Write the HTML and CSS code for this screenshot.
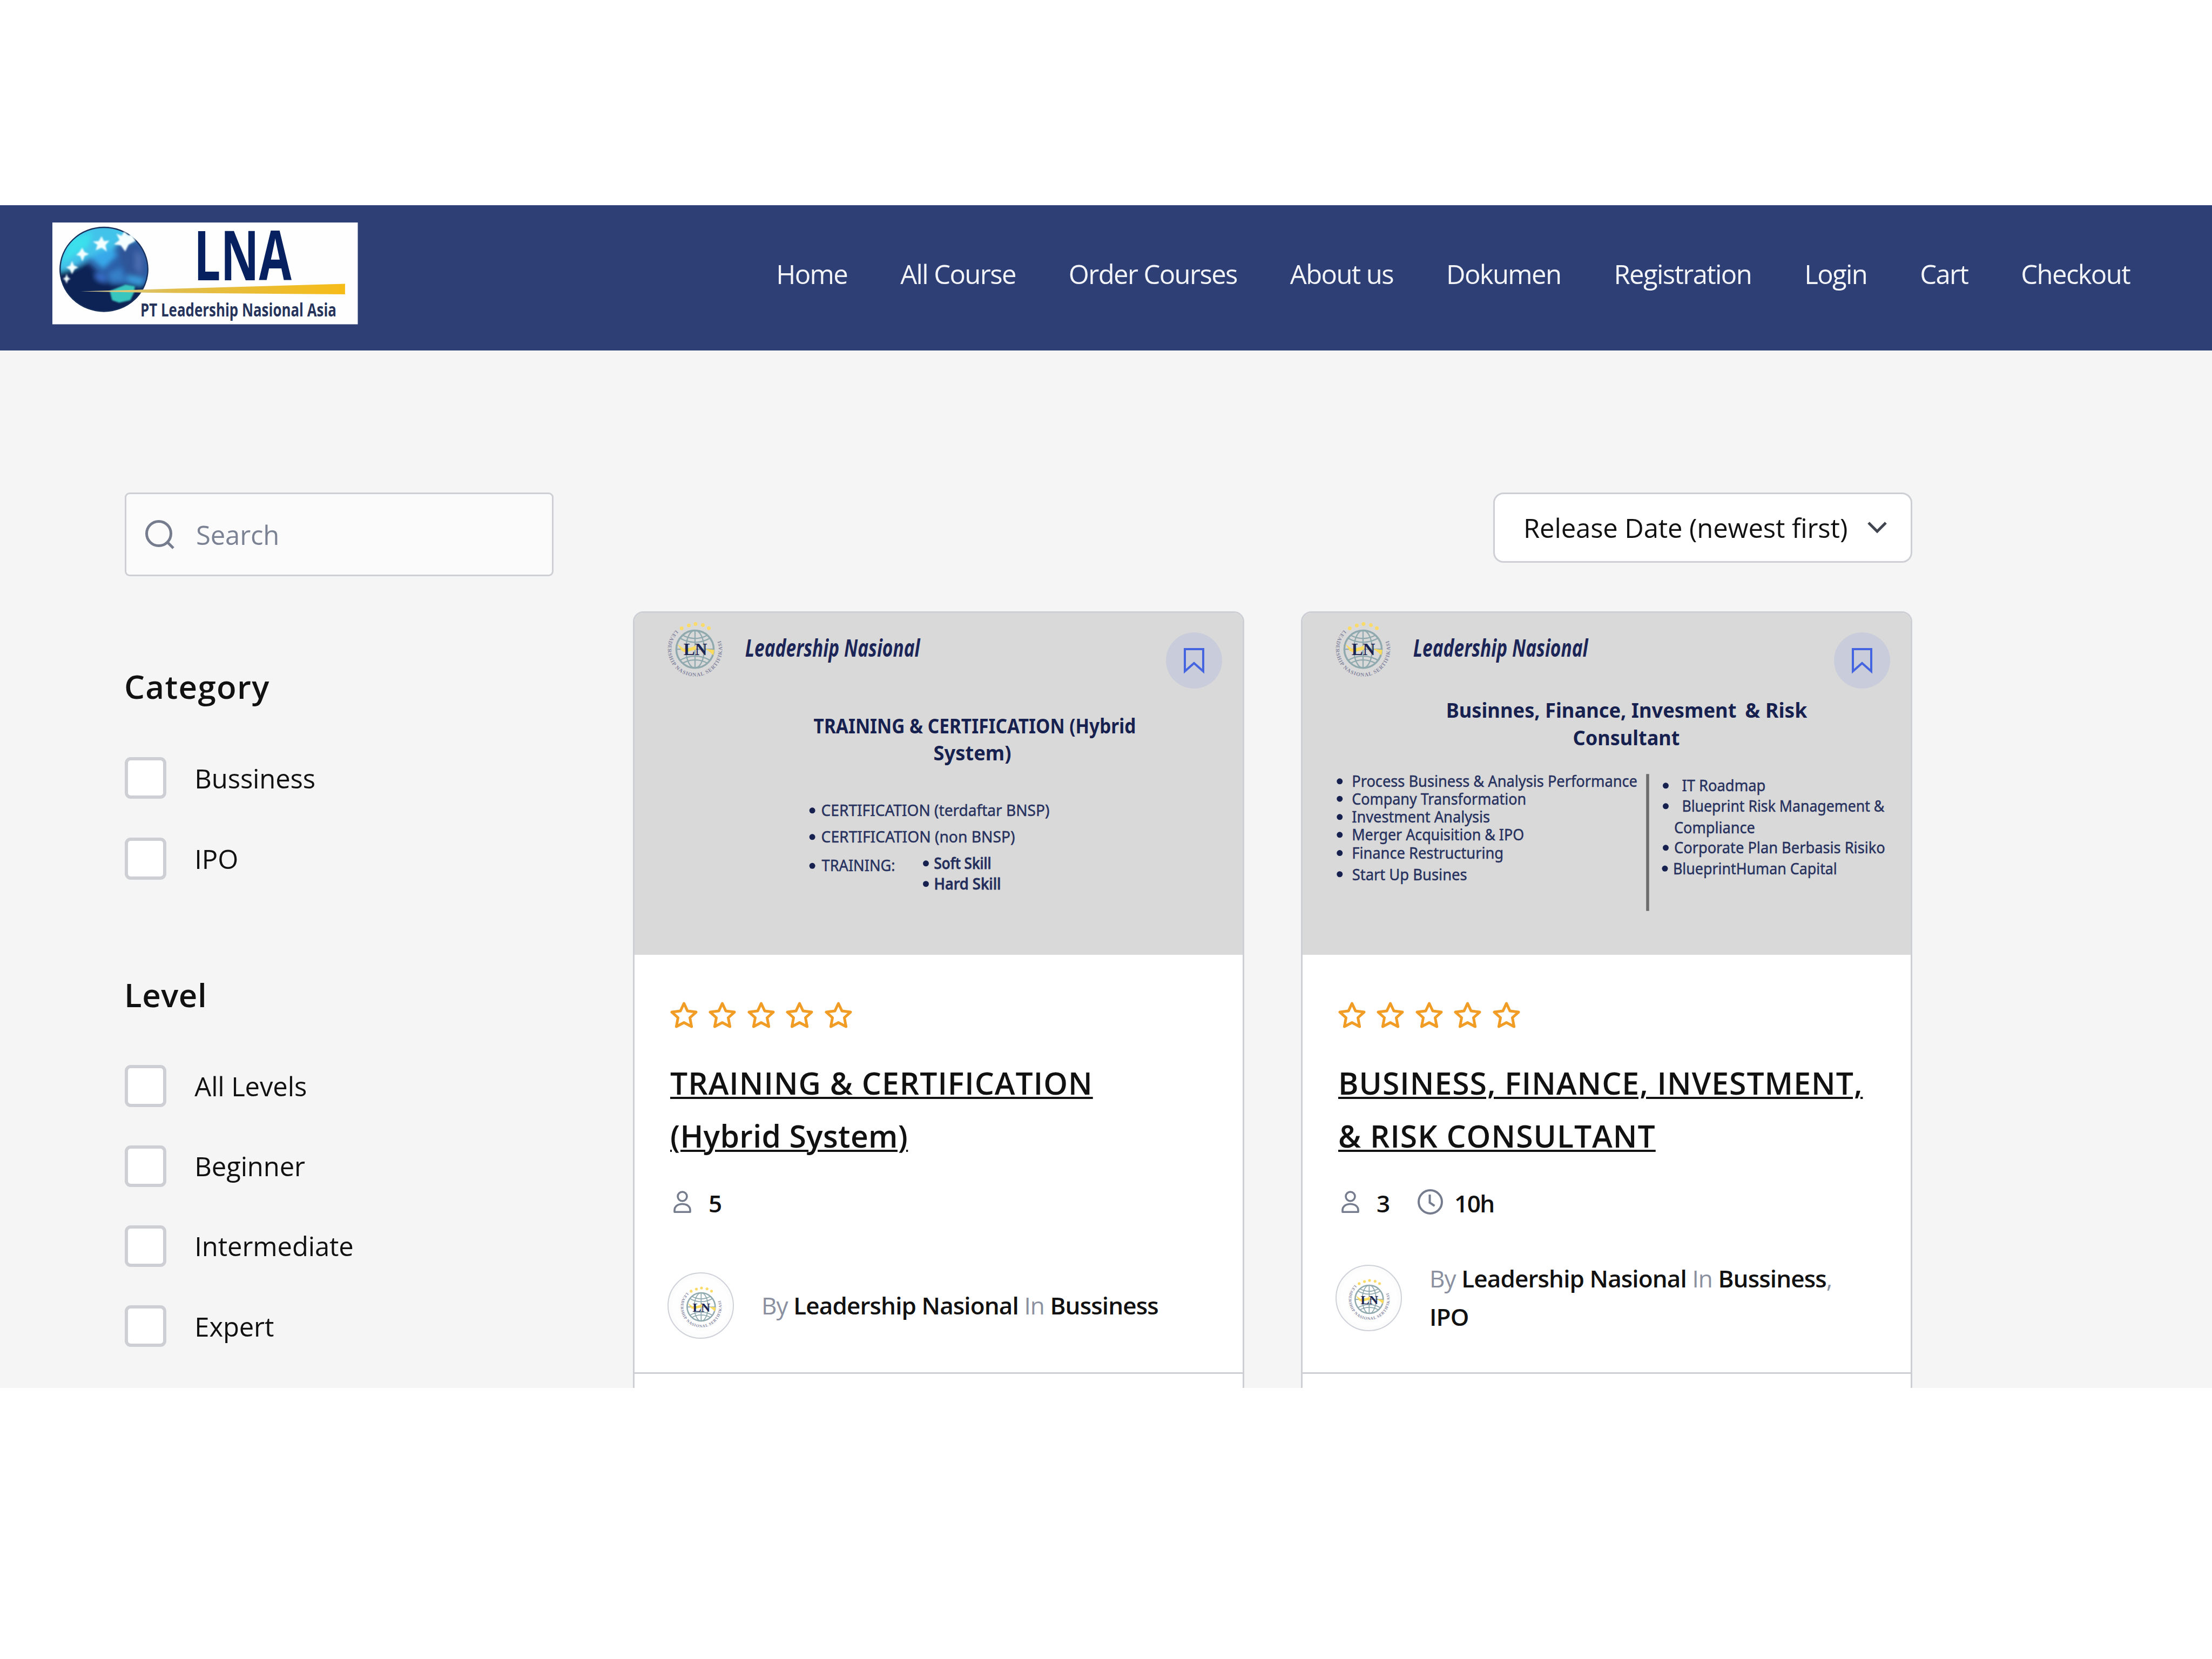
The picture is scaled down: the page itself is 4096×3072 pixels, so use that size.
FILE: index.html
```html
<!DOCTYPE html>
<html lang="id">
<head>
<meta charset="utf-8">
<title>LNA - All Course</title>
<link rel="stylesheet" href="styles.css">
</head>
<body>
<svg width="0" height="0" class="defs" aria-hidden="true">
  <defs>
    <symbol id="star" viewBox="0 0 51 50">
      <path d="M25.500 3.500L32 17.500L48 19.600L36.500 30L39.600 46.500L25.500 39L11.400 46.500L14.500 30L3 19.600L19 17.500Z" fill="none" stroke="#f09c25" stroke-width="5" stroke-linejoin="round"/>
    </symbol>
    <symbol id="person" viewBox="0 0 33 41">
      <circle cx="16.500" cy="10.500" r="8.500" fill="none" stroke="#757c8e" stroke-width="3.600"/>
      <path d="M2 39.200V36C2 29 8 24.500 16.500 24.500S31 29 31 36V39.200Z" fill="none" stroke="#757c8e" stroke-width="3.600" stroke-linejoin="round"/>
    </symbol>
    <symbol id="bookmark" viewBox="0 0 44 50">
      <path d="M5 4H39V45L22 30L5 45Z" fill="none" stroke="#4564e0" stroke-width="4"/>
    </symbol>
    <symbol id="emblem" viewBox="0 0 450 450">
      <path id="ring" d="M97 107A173 173 0 1 0 341 107" fill="none"/>
      <g fill="none" stroke="#8fa9ae" stroke-width="8">
        <circle cx="219" cy="229" r="119" stroke-width="12"/>
        <ellipse cx="219" cy="229" rx="58" ry="120"/>
        <path d="M219 109V349M99 229H339M122 158Q219 212 316 158M122 300Q219 246 316 300M140 140Q219 182 298 140M140 318Q219 276 298 318"/>
      </g>
      <path d="M105 196L150 228L205 215L222 205L225 232L190 240L160 250L135 240ZM285 226L342 234L336 268L316 250Z" fill="#fadb5e"/>
      <g fill="#fadb6a">
        <circle cx="134" cy="96" r="12"/><circle cx="179" cy="78" r="12"/><circle cx="222" cy="69" r="12"/><circle cx="269" cy="76" r="12"/><circle cx="307" cy="95" r="12"/>
      </g>
      <text x="146" y="268" class="emblem-ln" textLength="150" lengthAdjust="spacingAndGlyphs">LN</text>
      <text class="emblem-ring"><textPath href="#ring">LEADERSHIP NASIONAL SERTIFIKASI</textPath></text>
    </symbol>
  </defs>
</svg>

<div class="page">
  <header class="topbar">
    <svg class="logo" viewBox="0 0 565.500 188.500" role="img" aria-label="LNA">
      <defs>
        <clipPath id="globe-clip"><ellipse cx="333" cy="303" rx="281" ry="268"/></clipPath>
        <filter id="soft" x="-30%" y="-30%" width="160%" height="160%"><feGaussianBlur stdDeviation="16"/></filter>
        <filter id="soft-s" x="-30%" y="-30%" width="160%" height="160%"><feGaussianBlur stdDeviation="5"/></filter>
        <linearGradient id="wedge"><stop offset="0" stop-color="#d8cfa0"/><stop offset="0.350" stop-color="#e0bd4c"/><stop offset="1" stop-color="#f6bc18"/></linearGradient>
      </defs>
      <rect width="565.500" height="188.500" fill="#fefefe"/>
      <g transform="translate(-1.500 -1.500) scale(0.2912)">
        <g clip-path="url(#globe-clip)">
          <rect x="40" y="20" width="600" height="570" fill="#2c5fa8"/>
          <g filter="url(#soft)">
            <path d="M40 330V20H640V90L420 140L330 300L250 230L140 290Z" fill="#42c3ea"/>
            <path d="M60 270L120 100L260 70L230 160L130 220Z" fill="#3be0ec"/>
            <path d="M250 220L370 170L420 210L330 300Z" fill="#38a8ea"/>
            <path d="M40 320L150 300L230 260L300 330L380 400L640 400V600H40Z" fill="#0c2355"/>
            <path d="M420 190L540 130L600 230L590 360L480 340Z" fill="#2f5597"/>
            <path d="M270 330L330 340L350 390L290 370Z" fill="#3a6fd0"/>
            <path d="M360 330L440 290L470 380L380 380Z" fill="#3580c8"/>
            <path d="M480 340L590 360L570 410L480 380Z" fill="#3a9bdc"/>
            <path d="M530 180L580 220L570 340L530 300Z" fill="#4a6db0"/>
          </g>
          <path d="M370 440L470 400L530 410L525 450L500 500L430 515L385 500Z" fill="#37c6bf" filter="url(#soft-s)"/>
        </g>
        <ellipse cx="333" cy="303" rx="279" ry="267" fill="none" stroke="#17305c" stroke-width="8"/>
        <g fill="#f4ffff" filter="url(#soft-s)">
          <path d="M318 92L333 124L368 120L342 150L352 190L318 166L280 182L292 148L262 126L300 124Z"/>
          <path d="M462 62L488 88L510 80L534 122L490 146L468 190L440 150L396 144L432 116L412 76L446 90Z"/>
          <path d="M195 165L208 192L238 206L210 218L196 252L182 218L156 212L178 192Z"/>
          <path d="M130 250L142 278L170 290L146 302L130 334L116 304L92 290L118 280Z"/>
          <path d="M96 332L104 354L120 364L104 372L96 394L86 372L72 362L88 354Z"/>
        </g>
      </g>
      <path d="M52 127.500L542 113.500V133L180 130Z" fill="url(#wedge)"/>
      <text x="262" y="106.500" class="logo-lna" textLength="181" lengthAdjust="spacingAndGlyphs">LNA</text>
      <text x="163" y="174" class="logo-sub" textLength="363" lengthAdjust="spacingAndGlyphs">PT Leadership Nasional Asia</text>
    </svg>
    <nav class="menu">
      <a>Home</a><a>All Course</a><a>Order Courses</a><a>About us</a><a>Dokumen</a><a>Registration</a><a>Login</a><a>Cart</a><a>Checkout</a>
    </nav>
  </header>

  <div class="content">
    <aside class="sidebar">
      <div class="search">
        <svg class="search-icon" viewBox="0 0 56 56"><circle cx="26" cy="26" r="22.500"/><path d="M42 42L53 53"/></svg>
        <span>Search</span>
      </div>
      <section class="filter category">
        <h2>Category</h2>
        <label><i class="box"></i><span>Bussiness</span></label>
        <label><i class="box"></i><span>IPO</span></label>
      </section>
      <section class="filter level">
        <h2>Level</h2>
        <label><i class="box"></i><span>All Levels</span></label>
        <label><i class="box"></i><span>Beginner</span></label>
        <label><i class="box"></i><span>Intermediate</span></label>
        <label><i class="box"></i><span>Expert</span></label>
      </section>
    </aside>

    <main class="courses">
      <div class="sort">
        <span>Release Date (newest first)</span>
        <svg class="chevron" viewBox="0 0 38 24"><path d="M3 3L19 19L35 3"/></svg>
      </div>
      <div class="grid">
        <article class="card">
          <div class="thumb">
            <svg class="slide" viewBox="3 3 1125 633">
              <use href="#emblem" x="50.500" y="3.500" width="131" height="131"/>
              <text x="207" y="84" class="slide-brand" textLength="324" lengthAdjust="spacingAndGlyphs">Leadership Nasional</text>
              <text x="334" y="226" class="slide-title" textLength="597" lengthAdjust="spacingAndGlyphs">TRAINING &amp; CERTIFICATION (Hybrid</text>
              <text x="556" y="276.500" class="slide-title" textLength="144" lengthAdjust="spacingAndGlyphs">System)</text>
              <g class="slide-list">
                <circle cx="331.500" cy="369" r="5.500"/><text x="348" y="379.500" textLength="423" lengthAdjust="spacingAndGlyphs">CERTIFICATION (terdaftar BNSP)</text>
                <circle cx="331.500" cy="418" r="5.500"/><text x="348" y="428.500" textLength="359" lengthAdjust="spacingAndGlyphs">CERTIFICATION (non BNSP)</text>
                <circle cx="331.500" cy="471.500" r="5.500"/><text x="349" y="481.500" textLength="136" lengthAdjust="spacingAndGlyphs">TRAINING:</text>
                <g class="strong">
                  <circle cx="542" cy="467" r="5.500"/><text x="557" y="477" textLength="106" lengthAdjust="spacingAndGlyphs">Soft Skill</text>
                  <circle cx="542" cy="505" r="5.500"/><text x="557" y="515" textLength="124" lengthAdjust="spacingAndGlyphs">Hard Skill</text>
                </g>
              </g>
            </svg>
            <span class="save"><svg><use href="#bookmark"/></svg></span>
          </div>
          <div class="body">
            <div class="stars"><svg><use href="#star"/></svg><svg><use href="#star"/></svg><svg><use href="#star"/></svg><svg><use href="#star"/></svg><svg><use href="#star"/></svg></div>
            <h3><a>TRAINING &amp; CERTIFICATION</a><br><a class="mixed">(Hybrid System)</a></h3>
            <div class="meta"><svg class="person"><use href="#person"/></svg><b>5</b></div>
            <div class="author">
              <svg class="avatar" viewBox="0 0 123 123"><circle cx="61.500" cy="61.500" r="60.500" fill="#fcfcfc" stroke="#cfd1d9" stroke-width="2"/><circle cx="61.500" cy="61.500" r="53" fill="#fefefe"/><use href="#emblem" x="14.500" y="14" width="98.300" height="98.300"/></svg>
              <p><span>By</span> <b>Leadership Nasional</b> <span>In</span> <b>Bussiness</b></p>
            </div>
          </div>
          <div class="foot"></div>
        </article>

        <article class="card">
          <div class="thumb">
            <svg class="slide" viewBox="3 3 1125 633">
              <use href="#emblem" x="50.500" y="3.500" width="131" height="131"/>
              <text x="207" y="84" class="slide-brand" textLength="324" lengthAdjust="spacingAndGlyphs">Leadership Nasional</text>
              <text x="268" y="197.500" class="slide-title" textLength="538" lengthAdjust="spacingAndGlyphs">Businnes, Finance, Invesment</text>
              <text x="822" y="197.500" class="slide-title" textLength="115" lengthAdjust="spacingAndGlyphs">&amp; Risk</text>
              <text x="503" y="248.500" class="slide-title" textLength="198" lengthAdjust="spacingAndGlyphs">Consultant</text>
              <g class="slide-list">
                <circle cx="71" cy="315" r="5.500"/><text x="93.500" y="325.300" textLength="529" lengthAdjust="spacingAndGlyphs">Process Business &amp; Analysis Performance</text>
                <circle cx="71" cy="347.400" r="5.500"/><text x="93.500" y="358" textLength="323" lengthAdjust="spacingAndGlyphs">Company Transformation</text>
                <circle cx="71" cy="381" r="5.500"/><text x="93.500" y="391" textLength="256" lengthAdjust="spacingAndGlyphs">Investment Analysis</text>
                <circle cx="71" cy="414" r="5.500"/><text x="93.500" y="424" textLength="319" lengthAdjust="spacingAndGlyphs">Merger Acquisition &amp; IPO</text>
                <circle cx="71" cy="447.800" r="5.500"/><text x="93.500" y="458" textLength="281" lengthAdjust="spacingAndGlyphs">Finance Restructuring</text>
                <circle cx="71" cy="487" r="5.500"/><text x="94" y="498" textLength="213" lengthAdjust="spacingAndGlyphs">Start Up Busines</text>
                <circle cx="675" cy="323" r="5.500"/><text x="705" y="333" textLength="155" lengthAdjust="spacingAndGlyphs">IT Roadmap</text>
                <circle cx="675" cy="361" r="5.500"/><text x="705" y="371.500" textLength="375" lengthAdjust="spacingAndGlyphs">Blueprint Risk Management &amp;</text>
                <text x="690.500" y="411.500" textLength="150" lengthAdjust="spacingAndGlyphs">Compliance</text>
                <circle cx="675" cy="438" r="5.500"/><text x="690.500" y="448.500" textLength="391" lengthAdjust="spacingAndGlyphs">Corporate Plan Berbasis Risiko</text>
                <circle cx="673.500" cy="476.600" r="5.500"/><text x="688.500" y="487" textLength="304" lengthAdjust="spacingAndGlyphs">BlueprintHuman Capital</text>
              </g>
              <path d="M641.500 301.500V555" stroke="#6c6c6c" stroke-width="5.500"/>
            </svg>
            <span class="save"><svg><use href="#bookmark"/></svg></span>
          </div>
          <div class="body">
            <div class="stars"><svg><use href="#star"/></svg><svg><use href="#star"/></svg><svg><use href="#star"/></svg><svg><use href="#star"/></svg><svg><use href="#star"/></svg></div>
            <h3><a>BUSINESS, FINANCE, INVESTMENT,</a><br><a>&amp; RISK CONSULTANT</a></h3>
            <div class="meta"><svg class="person"><use href="#person"/></svg><b>3</b>
              <svg class="clock" viewBox="0 0 47 47"><circle cx="23.500" cy="23.500" r="21.500"/><path d="M22.500 10V25L31.500 31"/></svg><b class="hours">10h</b></div>
            <div class="author two-line">
              <svg class="avatar" viewBox="0 0 123 123"><circle cx="61.500" cy="61.500" r="60.500" fill="#fcfcfc" stroke="#cfd1d9" stroke-width="2"/><circle cx="61.500" cy="61.500" r="53" fill="#fefefe"/><use href="#emblem" x="14.500" y="14" width="98.300" height="98.300"/></svg>
              <p><span>By</span> <b>Leadership Nasional</b> <span>In</span> <b>Bussiness</b><span>,</span><br><b>IPO</b></p>
            </div>
          </div>
          <div class="foot"></div>
        </article>
      </div>
    </main>
  </div>
</div>
</body>
</html>
```

FILE: styles.css
```css
* { box-sizing: border-box; }

body {
  margin: 0;
  background: #fff;
  color: #111;
  font-family: "Open Sans", "Noto Sans", sans-serif;
  font-size: 49px;
  letter-spacing: -0.003em;
}

.defs { position: absolute; }

h2, h3, p { margin: 0; }
b, h2, h3 { font-weight: 600; }

.page {
  margin-top: 380px;
  height: 2189.500px;
  overflow: hidden;
  background: #f5f5f5;
}

.topbar {
  display: flex;
  justify-content: space-between;
  align-items: center;
  height: 269px;
  padding: 0 152px 17px 97px;
  background: #2e3f75;
}

.logo { width: 565.500px; height: 188.500px; overflow: visible; }
.logo-lna { font: 700 128px "Open Sans", sans-serif; letter-spacing: 0; fill: #062060; }
.logo-sub { font: 700 34px "Open Sans", sans-serif; letter-spacing: 0; fill: #26345c; }

.menu {
  display: flex;
  gap: 98px;
  padding-top: 2px;
  color: #f3f4f8;
  letter-spacing: -0.033em;
}

.content {
  display: flex;
  padding: 263px 555px 0 231px;
}

.sidebar { width: 794px; margin-right: 147px; flex: none; }

.search {
  display: flex;
  align-items: center;
  height: 155px;
  padding-left: 34px;
  border: 3px solid #cdcfd5;
  border-radius: 9px;
  background: #fbfbfb;
  color: #7b8293;
}

.search-icon {
  width: 56px;
  height: 56px;
  margin-right: 39px;
  fill: none;
  stroke: #757c8e;
  stroke-width: 5;
}

.filter { display: flex; flex-direction: column; gap: 72px; }
.filter h2 { font-size: 60px; line-height: 84px; margin: 0 0 17.300px -1px; letter-spacing: 0.022em; }
.filter label { display: flex; align-items: center; gap: 52px; height: 77.300px; }
.category { margin-top: 161.700px; }
.level { margin-top: 171.600px; gap: 70.900px; }
.level h2 { letter-spacing: 0.009em; }

.box {
  width: 77.300px;
  height: 77.300px;
  border: 6px solid #cdcfd5;
  border-radius: 11px;
  background: #fff;
}

.courses { flex: 1; display: flex; flex-direction: column; align-items: flex-end; }

.sort {
  display: flex;
  align-items: center;
  justify-content: space-between;
  width: 776px;
  height: 130px;
  padding: 0 43px 0 53px;
  border: 3px solid #cdcfd5;
  border-radius: 19px;
  background: #fff;
}

.chevron { width: 38px; height: 24px; fill: none; stroke: #41454f; stroke-width: 5; }

.grid {
  display: grid;
  grid-template-columns: 1fr 1fr;
  gap: 105px;
  width: 100%;
  margin-top: 90.300px;
}

.card {
  border: 3px solid #cdcfd5;
  border-radius: 19px;
  background: #fff;
  overflow: hidden;
}

.thumb { position: relative; height: 632.700px; background: #d9d9d9; }
.slide { display: block; width: 100%; height: 100%; letter-spacing: 0; }
.slide-brand { font: italic 700 44px "Open Sans", sans-serif; fill: #1b2558; }
.slide-title { font: 700 38px "Noto Sans", sans-serif; fill: #16214f; }
.slide-list { font: 400 29.500px "Noto Sans", sans-serif; fill: #27325f; }
.slide-list text { stroke: #27325f; stroke-width: 0.500px; }
.slide-list circle { fill: #16214f; }
.slide-list .strong { font-weight: 500; fill: #232d5c; }
.slide-list .strong text { stroke-width: 0.900px; }
.emblem-ln { font: 700 110px "Liberation Serif", serif; fill: #1c2450; }
.emblem-ring { font: 700 34px "Liberation Serif", serif; letter-spacing: 3.500px; fill: #85869f; }

.save {
  position: absolute;
  top: 36px;
  right: 38px;
  display: flex;
  align-items: center;
  justify-content: center;
  width: 104px;
  height: 104px;
  border-radius: 50%;
  background: #c9ccda;
}

.save svg { width: 44px; height: 50px; }

.body {
  display: flex;
  flex-direction: column;
  height: 773px;
  padding: 86px 40px 62px 66px;
}

.stars { display: flex; gap: 20.400px; }
.stars svg { width: 51px; height: 51px; }

.body h3 {
  margin-top: 51px;
  font-size: 57px;
  line-height: 98px;
  letter-spacing: 0.018em;
  white-space: nowrap;
}

.body h3 a { text-decoration: underline; text-decoration-thickness: 4px; text-underline-offset: 4px; }
.body h3 .mixed { letter-spacing: 0.006em; }

.meta {
  display: flex;
  align-items: center;
  height: 60px;
  margin-top: 46px;
  font-size: 44px;
}

.person { width: 33px; height: 41px; margin: 0 32px 4px 6px; }
.clock { width: 47px; height: 47px; margin: 0 21px 4px 51px; fill: none; stroke: #757c8e; stroke-width: 4; }
.hours { letter-spacing: -0.035em; }

.author {
  display: flex;
  align-items: center;
  gap: 51px;
  margin: auto 0 0 -5px;
  font-size: 44px;
  line-height: 71.500px;
  letter-spacing: -0.020em;
  white-space: nowrap;
}

.two-line { margin-bottom: 4px; }
.author span { color: #8a90a0; }
.avatar { width: 123px; height: 123px; flex: none; }
.foot { height: 60px; border-top: 3px solid #cdcfd5; }
```
